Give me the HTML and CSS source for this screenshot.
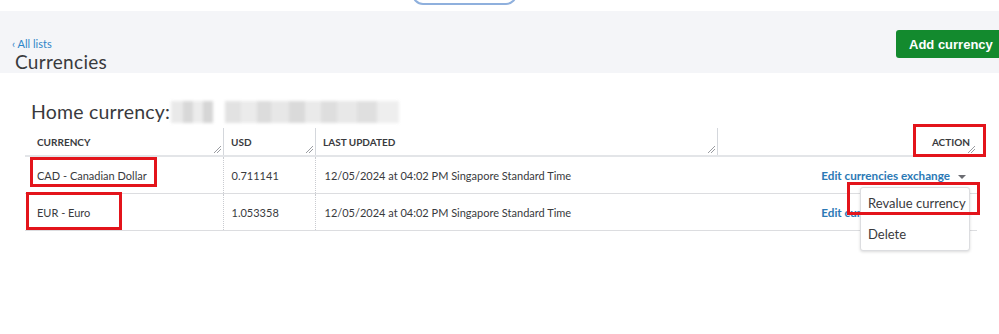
FILE: index.html
```html
<!doctype html>
<html>

<head>
    <meta charset="UTF-8">
    <title>Currencies</title>
    <link rel="stylesheet" href="styles.css">
</head>

<body>
    <!-- top nav, only the bottom of the pill shows -->
    <div class="topnav">
        <div class="pill"></div>
    </div>

    <div class="pagehead">
        <div class="titles">
            <a class="back" href="#">&lsaquo; All lists</a>
            <h1>Currencies</h1>
        </div>
        <button class="btn-add">Add currency</button>
    </div>

    <div class="content">
        <h2 class="home">Home currency:<span class="blurred"></span></h2>

        <table class="grid">
            <colgroup>
                <col class="c-cur">
                <col class="c-usd">
                <col class="c-upd">
                <col class="c-act">
            </colgroup>
            <thead>
                <tr>
                    <th>CURRENCY</th>
                    <th>USD</th>
                    <th>LAST UPDATED</th>
                    <th class="right">ACTION</th>
                </tr>
            </thead>
            <tbody>
                <tr>
                    <td>CAD - Canadian Dollar</td>
                    <td>0.711141</td>
                    <td>12/05/2024 at 04:02 PM Singapore Standard Time</td>
                    <td class="right"><a class="edit" href="#">Edit currencies exchange</a><span class="caret"></span></td>
                </tr>
                <tr>
                    <td>EUR - Euro</td>
                    <td>1.053358</td>
                    <td>12/05/2024 at 04:02 PM Singapore Standard Time</td>
                    <td class="right"><a class="edit" href="#">Edit currencies exchange</a><span class="caret"></span></td>
                </tr>
            </tbody>
        </table>
    </div>

    <!-- open dropdown of the first row -->
    <ul class="menu">
        <li>Revalue currency</li>
        <li>Delete</li>
    </ul>

    <!-- red annotation boxes -->
    <div class="mark" style="left:30px; top:157px; width:127px; height:30px;"></div>
    <div class="mark" style="left:26px; top:192px; width:96px; height:38px;"></div>
    <div class="mark" style="left:913px; top:124px; width:73px; height:33px;"></div>
    <div class="mark" style="left:847px; top:182px; width:133px; height:33px;"></div>
</body>

</html>
```

FILE: styles.css
```css
/* page */

body {
    margin: 0;
    font-family: Lato, "Open Sans", Arial, sans-serif;
    color: #393a3d;
    background: #fff;
    position: relative;
    height: 334px;
    overflow: hidden;
}

.topnav {
    display: flow-root;
    height: 11px;
    padding-left: 412px;
}

.pill {
    width: 101px;
    height: 18px;
    margin-top: -17px;
    border: 2px solid #8fb0dd;
    border-radius: 12px;
}

.pagehead {
    height: 62px;
    background: #f4f5f8;
    display: flex;
    justify-content: space-between;
    align-items: flex-start;
}

.titles {
    padding: 26px 0 0 12px;
}

.back {
    display: block;
    font-size: 11px;
    color: #2f86c8;
    text-decoration: none;
    line-height: 13px;
}

h1 {
    margin: 0 0 0 3px;
    font-size: 19px;
    font-weight: 400;
    line-height: 24px;
    color: #393a3d;
    letter-spacing: 0.3px;
}

.btn-add {
    margin-top: 19px;
    margin-right: -2px;
    width: 105px;
    height: 28px;
    border: 0;
    border-radius: 3px 0 0 3px;
    background: #138a2e;
    color: #fff;
    font-family: "Liberation Sans", Arial, sans-serif;
    font-weight: 700;
    font-size: 13px;
    text-align: left;
    padding-left: 13px;
}

/* list */

.content {
    padding: 24px 22px 0 25px;
}

.home {
    margin: 0 0 0 6px;
    font-size: 19.5px;
    font-weight: 400;
    line-height: 29px;
    letter-spacing: 0.2px;
    display: flex;
    align-items: center;
}

.blurred {
    display: inline-block;
    width: 228px;
    height: 22px;
    margin-left: 1px;
    background:
        linear-gradient(90deg, #e6e6e6 0 12px, #d2d2d2 12px 22px, #e9e9e9 22px 32px, #cfcfcf 32px 42px, #fff 42px 54px,
            #dedede 54px 70px, #e8e8e8 70px 86px, #d6d6d6 86px 100px, #e3e3e3 100px 118px, #d4d4d4 118px 134px,
            #e7e7e7 134px 150px, #d9d9d9 150px 166px, #e4e4e4 166px 186px, #dadada 186px 206px, #ececec 206px 228px);
    filter: blur(1.5px);
    opacity: 0.85;
}

.grid {
    width: 952px;
    table-layout: fixed;
    border-collapse: collapse;
}

.c-cur { width: 198px; }
.c-usd { width: 92px; }
.c-upd { width: 402px; }
.c-act { width: 260px; }

.grid th {
    position: relative;
    height: 27px;
    padding: 2px 8px 0;
    font-size: 10px;
    font-weight: 700;
    text-align: left;
    color: #393a3d;
    border-bottom: 2px solid #e3e5e8;
}

.grid th + th {
    background: linear-gradient(#d4d7dc, #d4d7dc) left 2px / 1px 100% no-repeat;
}

.grid th::after {
    content: "";
    position: absolute;
    right: 2px;
    bottom: 2px;
    width: 7px;
    height: 7px;
    background: linear-gradient(135deg, transparent 44%, #9a9ca1 44% 52%, transparent 52% 70%, #9a9ca1 70% 78%, transparent 78%);
}

.grid th:first-child,
.grid td:first-child {
    padding-left: 12px;
}

.grid td {
    height: 36px;
    padding: 0 8px;
    font-size: 11px;
    border-bottom: 1px solid #dcdde0;
    white-space: nowrap;
    overflow: hidden;
}

.grid td + td {
    border-left: 1px dotted #c9cbd0;
}

.grid td:last-child {
    border-left: 0;
    padding-right: 11px;
}

.grid td:nth-child(3) {
    padding-left: 9px;
}

.grid th.right {
    text-align: right;
    padding-right: 7px;
}

.grid td.right {
    text-align: right;
}

.edit {
    font-size: 11.7px;
    font-weight: 700;
    color: #2b79b5;
    text-decoration: none;
}

.caret {
    display: inline-block;
    margin-left: 8px;
    border-left: 4px solid transparent;
    border-right: 4px solid transparent;
    border-top: 4px solid #6b6c72;
    vertical-align: middle;
}

/* dropdown, sits over row 2 */

.menu {
    position: absolute;
    left: 860px;
    top: 187px;
    width: 108px;
    margin: 0;
    padding: 0;
    list-style: none;
    background: #fff;
    border: 1px solid #dcdde0;
    border-radius: 3px;
    box-shadow: 0 1px 3px rgba(0, 0, 0, 0.15);
}

.menu li {
    padding: 0 7px;
    height: 31px;
    line-height: 31px;
    font-size: 13px;
    color: #393a3d;
    white-space: nowrap;
}

.mark {
    position: absolute;
    box-sizing: border-box;
    border: 3px solid #e3141b;
}
```
